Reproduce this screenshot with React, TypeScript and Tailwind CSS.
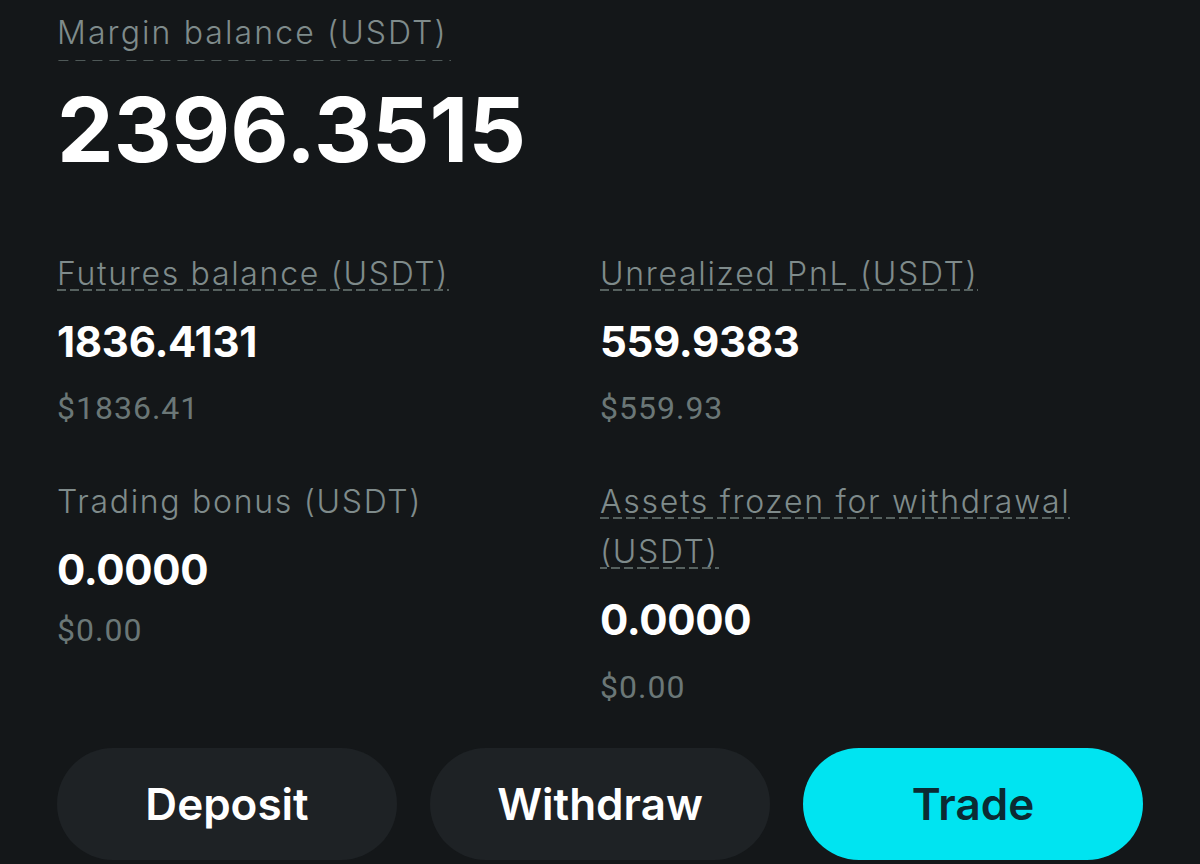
import React from 'react';

const dashLine =
  'bg-[linear-gradient(to_right,#56615f_70%,transparent_0)] bg-[length:13px_1.5px] bg-repeat-x bg-[position:0_calc(100%_-_3px)]';

type Item = {
  label: string;
  value: string;
  usd: string;
  dashed?: boolean;
  usdGap: string;
};

const Stat = ({ item }: { item: Item }) => (
  <div className="flex flex-col">
    <div className="text-[32px] leading-[50px] font-light text-[#7f8b8b] tracking-[1.7px]">
      <span className={item.dashed ? dashLine : ''}>{item.label}</span>
    </div>
    <div className="mt-[18px] text-[42px] leading-[50px] font-bold text-white tracking-[-0.3px]">
      {item.value}
    </div>
    <div
      className={`${item.usdGap} text-[32px] leading-[40px] tracking-[1px] text-[#6b7777] font-[Roboto,'Liberation_Sans',sans-serif]`}
    >
      {item.usd}
    </div>
  </div>
);

export default function App() {
  const left: Item[] = [
    { label: 'Futures balance (USDT)', value: '1836.4131', usd: '$1836.41', dashed: true, usdGap: 'mt-[21px]' },
    { label: 'Trading bonus (USDT)', value: '0.0000', usd: '$0.00', usdGap: 'mt-[15px]' },
  ];
  const right: Item[] = [
    { label: 'Unrealized PnL (USDT)', value: '559.9383', usd: '$559.93', dashed: true, usdGap: 'mt-[21px]' },
    { label: 'Assets frozen for withdrawal (USDT)', value: '0.0000', usd: '$0.00', dashed: true, usdGap: 'mt-[22px]' },
  ];

  return (
    <div className="w-[1200px] h-[864px] overflow-hidden bg-[#141719] px-[57px] font-['Inter','Noto_Sans',sans-serif]">
      <div className="pt-[13px]">
        <span className="inline-block text-[32px] leading-[40px] font-light text-[#7f8b8b] tracking-[2.1px] pb-[8px] bg-[linear-gradient(to_right,#4f5958_60%,transparent_0)] bg-[length:17px_1.5px] bg-repeat-x bg-bottom pr-[3px]">
          Margin balance (USDT)
        </span>
      </div>
      <div className="mt-[24px] text-[90px] leading-[90px] font-bold text-white">2396.3515</div>

      <div className="mt-[74px] grid grid-cols-2">
        <div className="flex flex-col gap-[49px]">
          {left.map((it) => (
            <Stat key={it.label} item={it} />
          ))}
        </div>
        <div className="flex flex-col gap-[49px] pr-[60px]">
          {right.map((it) => (
            <Stat key={it.label} item={it} />
          ))}
        </div>
      </div>

      <div className="mt-[41px] flex gap-[33px]">
        <button className="flex-1 h-[112px] rounded-full bg-[#1e2225] text-white text-[44px] font-semibold">
          Deposit
        </button>
        <button className="flex-1 h-[112px] rounded-full bg-[#1e2225] text-white text-[44px] font-semibold">
          Withdraw
        </button>
        <button className="flex-1 h-[112px] rounded-full bg-[#00e4f1] text-[#0b2b33] text-[44px] font-semibold">
          Trade
        </button>
      </div>
    </div>
  );
}
